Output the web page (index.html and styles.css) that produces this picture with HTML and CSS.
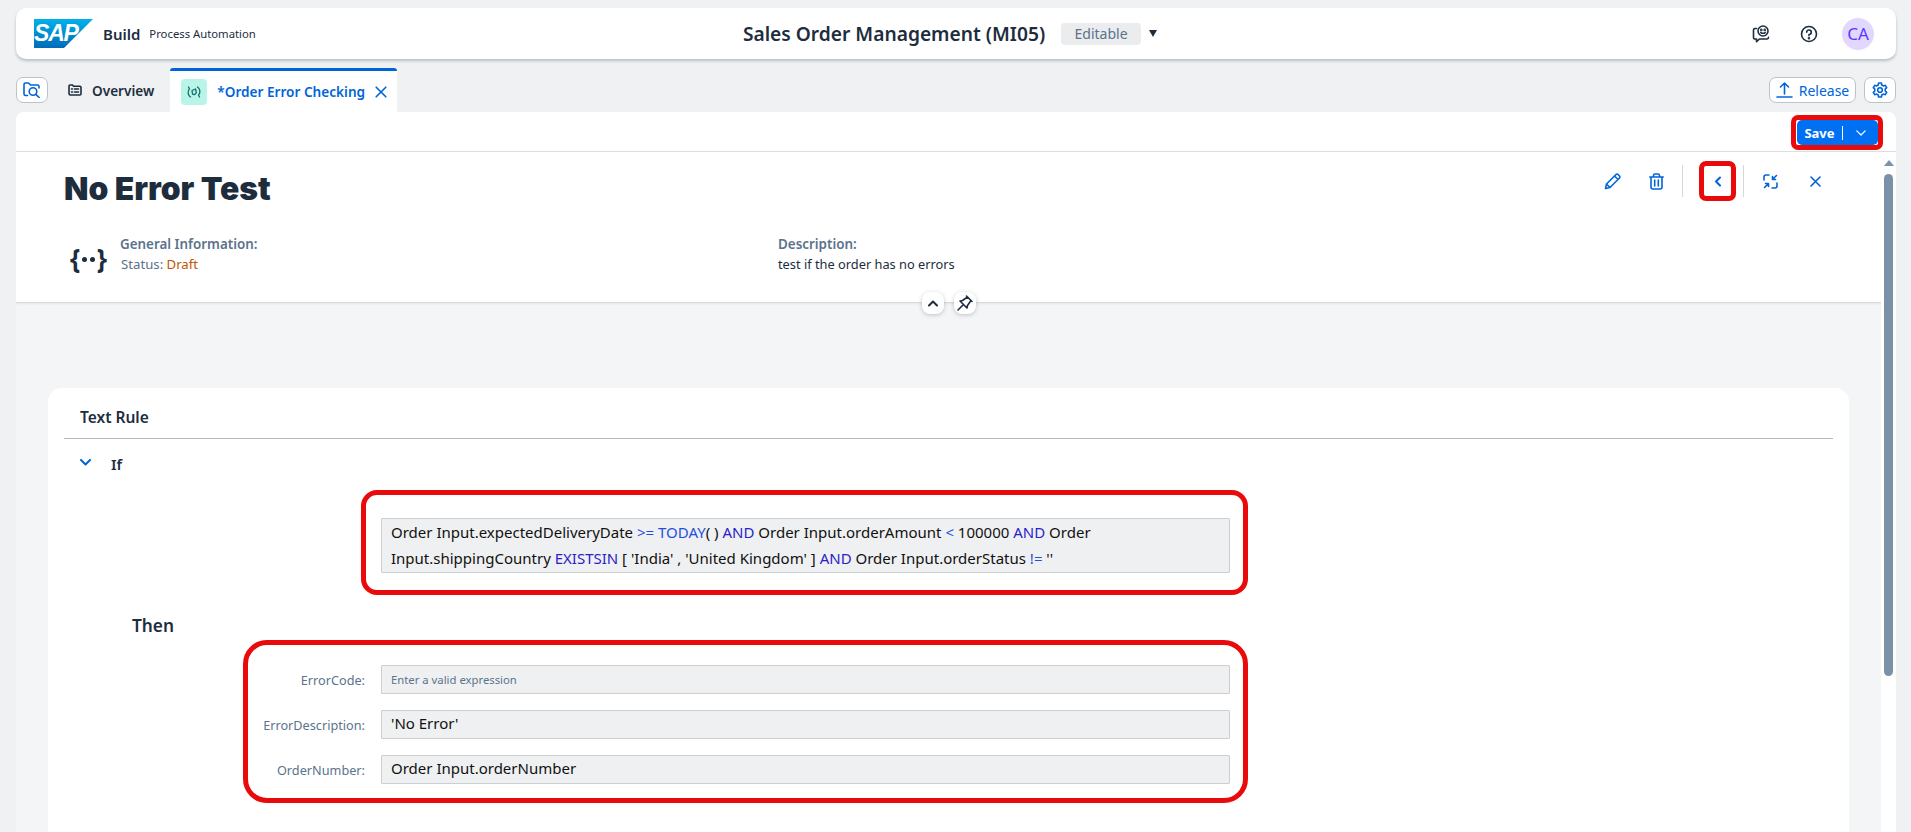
FILE: index.html
```html
<!DOCTYPE html>
<html>
<head>
<meta charset="utf-8"/>
<title>Order Error Checking</title>
<link rel="stylesheet" href="styles.css">
</head>
<body>

<header class="shell">
  <div class="shell-left">
    <div class="sap-logo">
      <svg width="59" height="29" viewBox="0 0 59 29">
        <defs>
          <linearGradient id="sapblue" x1="0" y1="0" x2="0" y2="1">
            <stop offset="0" stop-color="#00b1eb"/>
            <stop offset="1" stop-color="#006cb8"/>
          </linearGradient>
        </defs>
        <polygon points="0,0 59,0 30,29 0,29" fill="url(#sapblue)"/>
      </svg>
      <span class="sap-word">SAP</span>
    </div>
    <span class="brand">Build</span>
    <span class="product">Process Automation</span>
  </div>
  <div class="shell-mid">
    <span class="project">Sales Order Management (MI05)</span>
    <span class="pill">Editable</span>
    <span class="caret"></span>
  </div>
  <div class="shell-right">
    <svg class="ico-dark ico-mid" width="18" height="18" viewBox="0 0 18 18">
      <path d="M4.500 3.500H3A1.500 1.500 0 0 0 1.500 5v7.500A1.500 1.500 0 0 0 3 14h1.500v2.700l3-2.700H15a1.800 1.800 0 0 0 1.500-1.800" />
      <circle cx="11" cy="6" r="5"/>
      <circle cx="9.300" cy="4.900" r=".5"/>
      <circle cx="12.700" cy="4.900" r=".5"/>
      <path d="M8.800 7.400c1 1.200 3.400 1.200 4.400 0"/>
    </svg>
    <svg class="ico-dark ico-mid" width="18" height="18" viewBox="0 0 18 18">
      <circle cx="9" cy="9" r="7.500"/>
      <path d="M6.700 7.200A2.300 2.300 0 1 1 9 9.600v1.200"/>
      <circle cx="9" cy="13.200" r=".5"/>
    </svg>
    <span class="avatar">CA</span>
  </div>
</header>

<nav class="tabs">
  <button class="tool-btn">
    <svg class="ico-blue ico-mid" width="18" height="16" viewBox="0 0 18 16">
      <path d="M4.500 13.500H2.500A1.500 1.500 0 0 1 1 12V2.500A1.500 1.500 0 0 1 2.500 1h3l2 2h7A1.500 1.500 0 0 1 16 4.500V6"/>
      <circle cx="10" cy="9.500" r="3.800"/>
      <path d="M12.800 12.300l3.400 3.200"/>
    </svg>
  </button>
  <div class="tab">
    <svg class="ico-dark ico-mid" width="14" height="12" viewBox="0 0 14 12">
      <path d="M1 9.500V2.200A1.200 1.200 0 0 1 2.200 1h2.300l1 1.200h6.300A1.200 1.200 0 0 1 13 3.400v6.400a1.200 1.200 0 0 1-1.200 1.200H2.500A1.500 1.500 0 0 1 1 9.500z"/>
      <path d="M3.500 5h1M6.500 5h4M3.500 8h1M6.500 8h4"/>
    </svg>
    <span>Overview</span>
  </div>
  <div class="tab tab-active">
    <span class="tab-badge">
      <svg width="14" height="14" viewBox="0 0 14 14">
        <path d="M2 4.500A5.500 5.500 0 0 0 3.500 12M1.500 2l1 2M12 9.500A5.500 5.500 0 0 0 10.500 2M12.500 12l-1-2"/>
        <path d="M5 5.500l3.500-1.500.8 3.500A2.400 2.400 0 0 1 5.500 9z"/>
      </svg>
    </span>
    <span>*Order Error Checking</span>
    <svg class="ico-blue ico-mid" width="12" height="12" viewBox="0 0 12 12">
      <path d="M1.200 1.200l9.600 9.600M10.800 1.200l-9.600 9.600"/>
    </svg>
  </div>
  <div class="tabs-end">
    <button class="tool-btn release">
      <svg class="ico-blue ico-mid" width="17" height="18" viewBox="0 0 17 18">
        <path d="M8.500 13V2M4.500 6l4-4 4 4M1 16h15"/>
      </svg>
      <span>Release</span>
    </button>
    <button class="tool-btn gear">
      <svg class="ico-blue ico-mid" width="16" height="16" viewBox="0 0 16 16">
        <path d="M6.600 1h2.800l.4 2 1.500.9 2-.6 1.400 2.400-1.500 1.400v1.800l1.500 1.400-1.400 2.400-2-.6-1.500.9-.4 2H6.600l-.4-2-1.500-.9-2 .6-1.400-2.400 1.500-1.400V7.100L1.300 5.700l1.400-2.400 2 .6 1.500-.9z"/>
        <circle cx="8" cy="8" r="2.300"/>
      </svg>
    </button>
  </div>
</nav>

<section class="panel">
  <div class="panel-bar">
    <div class="mark mark-save">
      <button class="save">
        <span class="save-label">Save</span>
        <span class="save-arrow">
          <svg width="10" height="6" viewBox="0 0 10 6"><path d="M.8.8L5 5l4.200-4.200"/></svg>
        </span>
      </button>
    </div>
  </div>

  <div class="panel-scroll">
    <main class="page">
      <div class="object-head">
        <div class="title-row">
          <h1>No Error Test</h1>
          <div class="actions">
            <svg class="ico-blue ico-mid" width="17" height="17" viewBox="0 0 17 17">
              <path d="M1.500 15.500l1-4.500L12 1.500a1.400 1.400 0 0 1 2 0l1.500 1.500a1.400 1.400 0 0 1 0 2L6 14.500zM2.500 11L6 14.500M10.500 3l3.500 3.500"/>
            </svg>
            <svg class="ico-blue ico-mid act-trash" width="15" height="17" viewBox="0 0 15 17">
              <path d="M.8 4h13.400M4.500 4V2.500A1.500 1.500 0 0 1 6 1h3a1.500 1.500 0 0 1 1.500 1.500V4M2 4v10a2 2 0 0 0 2 2h7a2 2 0 0 0 2-2V4M5.700 7v6M9.300 7v6"/>
            </svg>
            <span class="act-sep"></span>
            <div class="mark mark-back">
              <svg class="ico-blue ico-thick" width="8" height="11" viewBox="0 0 8 11"><path d="M6 1.500L2 5.500 6 9.500"/></svg>
            </div>
            <span class="act-sep"></span>
            <svg class="ico-blue ico-mid act-shrink" width="15" height="15" viewBox="0 0 15 15">
              <path d="M1 6V3a2 2 0 0 1 2-2h3M14 9v3a2 2 0 0 1-2 2H9M13.500 1.500l-4 4M9.500 2.500v3h3M1.500 13.500l4-4M2.500 9.500h3v3"/>
            </svg>
            <svg class="ico-blue ico-mid act-close" width="11" height="11" viewBox="0 0 11 11">
              <path d="M1 1l9 9M10 1l-9 9"/>
            </svg>
          </div>
        </div>
        <div class="facets">
          <div class="facet-icon">
            <span class="brace">{</span>
            <span class="dot"></span>
            <span class="dot"></span>
            <span class="brace">}</span>
          </div>
          <div class="facet facet-info">
            <div class="facet-label">General Information:</div>
            <div class="facet-text"><span class="muted">Status:</span> <span class="draft">Draft</span></div>
          </div>
          <div class="facet">
            <div class="facet-label">Description:</div>
            <div class="facet-text">test if the order has no errors</div>
          </div>
        </div>
        <div class="head-toggles">
          <span class="round-btn">
            <svg class="ico-dark ico-thick" width="10" height="7" viewBox="0 0 10 7"><path d="M1 5.500l4-4 4 4"/></svg>
          </span>
          <span class="round-btn">
            <svg class="ico-dark ico-mid" width="16" height="16" viewBox="0 0 16 16">
              <path d="M9.500 1l5.500 5.500M10.500 2l-5 3.500-2.500.5 7 7 .5-2.500 3.500-5M6 10l-5 5"/>
            </svg>
          </span>
        </div>
      </div>

      <div class="card">
        <div class="card-title">Text Rule</div>
        <div class="if-row">
          <svg class="ico-blue ico-thick" width="11" height="7" viewBox="0 0 11 7"><path d="M1 1l4.500 4.500L10 1"/></svg>
          <span>If</span>
        </div>
        <div class="mark mark-if">
          <div class="expr expr-multi">
            <div>Order Input.expectedDeliveryDate <span class="op">&gt;=</span> <span class="op">TODAY</span>( ) <span class="kw">AND</span> Order Input.orderAmount <span class="op">&lt;</span> 100000 <span class="kw">AND</span> Order</div>
            <div>Input.shippingCountry <span class="kw">EXISTSIN</span> [ 'India' , 'United Kingdom' ] <span class="kw">AND</span> Order Input.orderStatus <span class="op">!=</span> ''</div>
          </div>
        </div>
        <div class="then-label">Then</div>
        <div class="mark mark-then">
          <div class="field">
            <label>ErrorCode:</label>
            <div class="expr expr-hint">Enter a valid expression</div>
          </div>
          <div class="field">
            <label>ErrorDescription:</label>
            <div class="expr">'No Error'</div>
          </div>
          <div class="field">
            <label>OrderNumber:</label>
            <div class="expr">Order Input.orderNumber</div>
          </div>
        </div>
      </div>
    </main>
    <div class="scrollbar">
      <span class="scroll-up"></span>
      <span class="scroll-thumb"></span>
    </div>
  </div>
</section>

</body>
</html>
```

FILE: styles.css
```css
* {
   box-sizing: border-box;
}

html, body {
   height: 100%;
}

body {
   margin: 0;
   padding: 8px 15px 0 16px;
   overflow: hidden;
   display: flex;
   flex-direction: column;
   background-color: #eff1f2;
   color: #1d2d3e;
   font-family: "Noto Sans", "Open Sans", sans-serif;
   font-size: 14px;
}

button {
   font-family: inherit;
}

svg {
   display: block;
   flex: none;
   fill: none;
   stroke-linecap: round;
   stroke-linejoin: round;
   stroke-width: 1.3;
}

.ico-blue {
   stroke: #0064d9;
}

.ico-dark {
   stroke: #1d2d3e;
}

.ico-mid {
   stroke-width: 1.6;
}

.ico-thick {
   stroke-width: 2;
}

/* top shell bar */

.shell {
   flex: none;
   height: 51px;
   display: grid;
   grid-template-columns: 1fr auto 1fr;
   align-items: center;
   background-color: #fff;
   border-radius: 10px;
   box-shadow: 0 2px 3px rgba(29, 45, 62, 0.25);
}

.shell-left {
   display: flex;
   align-items: center;
   padding-left: 18px;
}

.sap-logo {
   position: relative;
   width: 59px;
   height: 29px;
   margin-right: 9px;
}

.sap-word {
   position: absolute;
   left: 0;
   top: 1px;
   color: #fff;
   font-family: "Liberation Sans", sans-serif;
   font-size: 23px;
   line-height: 27px;
   font-weight: 700;
   font-style: italic;
   letter-spacing: -1.2px;
}

.brand {
   margin-left: 1px;
   font-size: 15px;
   font-weight: 600;
}

.product {
   margin-left: 9px;
   font-size: 11.3px;
}

.shell-mid {
   padding-right: 12px;
   display: flex;
   align-items: center;
}

.project {
   font-size: 19.2px;
   font-weight: 600;
}

.pill {
   width: 80px;
   height: 22px;
   margin-left: 16px;
   display: flex;
   align-items: center;
   justify-content: center;
   background-color: #eaecee;
   border-radius: 4px;
   color: #5b738b;
   font-size: 14px;
}

.caret {
   width: 0;
   height: 0;
   margin-left: 8px;
   border-left: 4.5px solid transparent;
   border-right: 4.5px solid transparent;
   border-top: 7px solid #1d2d3e;
}

.shell-right {
   display: flex;
   align-items: center;
   justify-content: flex-end;
   gap: 30px;
   padding-right: 22px;
}

.avatar {
   width: 32px;
   height: 32px;
   margin-left: -6px;
   display: flex;
   align-items: center;
   justify-content: center;
   border-radius: 50%;
   background-color: #e2d8ff;
   color: #5d36ff;
   font-size: 17px;
}

/* tab strip */

.tabs {
   flex: none;
   height: 44px;
   margin-top: 9px;
   display: flex;
   align-items: center;
}

.tool-btn {
   height: 26px;
   width: 32px;
   padding: 0;
   display: flex;
   align-items: center;
   justify-content: center;
   background-color: #fff;
   border: 1px solid #bcc3ca;
   border-radius: 7px;
   color: #0064d9;
   font-size: 14px;
}

.tab {
   height: 44px;
   display: flex;
   align-items: center;
   gap: 10px;
   margin-left: 20px;
   font-weight: 600;
   font-size: 13.6px;
}

.tab-active {
   width: 227px;
   margin-left: 16px;
   padding: 0 10px 0 11px;
   gap: 0;
   justify-content: space-between;
   background-color: #fff;
   border-top: 3px solid #0064d9;
   border-radius: 3px 3px 0 0;
   color: #0064d9;
}

.tab-badge {
   width: 26px;
   height: 26px;
   display: flex;
   align-items: center;
   justify-content: center;
   background-color: #b8f5e8;
   border-radius: 4px;
}

.tab-badge svg {
   stroke: #0f6f6a;
}

.tabs-end {
   margin-left: auto;
   display: flex;
   gap: 8px;
}

.release {
   width: 87px;
   gap: 6px;
}

.gear {
   width: 32px;
}

/* main panel */

.panel {
   flex: 1;
   min-height: 0;
   display: flex;
   flex-direction: column;
   background-color: #fff;
   border-radius: 8px 8px 0 0;
   overflow: hidden;
}

.panel-bar {
   flex: none;
   height: 40px;
   padding: 3px 13px 0 0;
   display: flex;
   justify-content: flex-end;
   border-bottom: 1px solid #dcdee0;
}

.mark {
   border: 5px solid #e90b0b;
   background-color: #fff;
}

.mark-save {
   width: 92px;
   height: 35px;
   padding: 0 0 0 1px;
   border-radius: 7px;
}

.save {
   width: 81px;
   height: 25px;
   padding: 0;
   display: flex;
   align-items: center;
   background-color: #0070f2;
   border: none;
   border-radius: 5px;
   color: #fff;
   font-size: 13px;
   font-weight: 700;
}

.save-label {
   width: 46px;
   height: 14px;
   line-height: 14px;
   border-right: 1px solid #fff;
}

.save-arrow {
   flex: 1;
   display: flex;
   justify-content: center;
}

.save-arrow svg {
   stroke: #fff;
   stroke-width: 1.2;
}

.panel-scroll {
   flex: 1;
   min-height: 0;
   display: flex;
}

.page {
   flex: 1;
   min-width: 0;
   overflow: hidden;
   background-color: #f4f5f7;
}

.scrollbar {
   flex: none;
   width: 15px;
   padding: 8px 3px 0;
   display: flex;
   flex-direction: column;
   align-items: center;
   gap: 8px;
   background-color: #fff;
}

.scroll-up {
   width: 0;
   height: 0;
   border-left: 5px solid transparent;
   border-right: 5px solid transparent;
   border-bottom: 6px solid #7b91a8;
}

.scroll-thumb {
   width: 9px;
   height: 502px;
   background-color: #7b91a8;
   border-radius: 5px;
}

/* object page header */

.object-head {
   position: relative;
   height: 151px;
   padding: 0 0 0 49px;
   background-color: #fff;
   border-bottom: 1px solid #d9dcdf;
   box-shadow: 0 1px 2px rgba(29, 45, 62, 0.08);
}

.title-row {
   height: 75px;
   display: flex;
   justify-content: space-between;
}

h1 {
   margin: 17px 0 0 -1px;
   font-family: Inter, sans-serif;
   font-size: 31.8px;
   line-height: 40px;
   font-weight: 900;
}

.actions {
   height: 48px;
   padding: 9px 60px 0 0;
   display: flex;
   align-items: center;
}

.actions > svg {
   margin-top: 2px;
}

.act-trash {
   margin-left: 28px;
}

.act-sep {
   width: 1px;
   height: 32px;
   margin-left: 18px;
   background-color: #d5d8db;
}

.mark-back {
   width: 37px;
   height: 40px;
   margin-left: 16px;
   padding-top: 2px;
   display: flex;
   align-items: center;
   justify-content: center;
   border-radius: 7px;
}

.mark-back + .act-sep {
   margin-left: 7px;
}

.act-shrink {
   margin-left: 19px;
}

.act-close {
   margin-left: 32px;
}

.facets {
   display: flex;
   align-items: flex-start;
   padding-top: 7px;
}

.facet-icon {
   width: 37px;
   height: 26px;
   margin: 11px 0 0 5px;
   display: flex;
   align-items: center;
   justify-content: space-between;
   color: #1d2d3e;
}

.brace {
   font-family: "Noto Sans", sans-serif;
   font-size: 26px;
   line-height: 26px;
   font-weight: 700;
}

.dot {
   width: 5px;
   height: 5px;
   margin-top: 3px;
   border-radius: 50%;
   background-color: #1d2d3e;
}

.facet-info {
   width: 658px;
   margin-left: 13px;
}

.facet-label {
   color: #5b738b;
   font-size: 13.4px;
   line-height: 20px;
   font-weight: 600;
}

.facet-text {
   font-size: 12.8px;
   line-height: 20px;
}

.muted {
   margin-left: 1px;
   color: #5b738b;
   font-size: 13.2px;
}

.draft {
   color: #c35500;
   font-size: 13.2px;
}

.head-toggles {
   position: absolute;
   left: 906px;
   bottom: -12px;
   display: flex;
   gap: 10px;
}

.round-btn {
   width: 22px;
   height: 22px;
   display: flex;
   align-items: center;
   justify-content: center;
   background-color: #fff;
   border-radius: 8px;
   box-shadow: 0 1px 4px rgba(29, 45, 62, 0.25);
}

/* rule card */

.card {
   margin: 85px 32px 0;
   padding: 0 16px 40px;
   background-color: #fff;
   border-radius: 14px 14px 0 0;
}

.card-title {
   height: 51px;
   padding: 19px 0 0 16px;
   border-bottom: 1px solid #afb8c1;
   font-size: 15.5px;
   line-height: 20px;
   font-weight: 600;
}

.if-row {
   height: 51px;
   display: flex;
   gap: 20px;
   align-items: center;
   padding: 0 0 0 16px;
   font-size: 15px;
   font-weight: 600;
}

.if-row svg {
   margin-top: -5px;
}

.if-row span {
   margin-top: -2px;
}

.mark-if {
   width: 887px;
   height: 105px;
   margin-left: 297px;
   padding: 23px 13px 0 15px;
   border-radius: 16px;
}

.expr {
   height: 29px;
   padding: 0 9px;
   background-color: #eff0f2;
   border: 1px solid #cdced0;
   border-radius: 1px;
   color: #111;
   font-size: 15px;
   line-height: 25px;
}

.expr-multi {
   width: 849px;
   height: 55px;
   line-height: 26px;
}

.expr-hint {
   color: #5b738b;
   font-size: 11.3px;
   line-height: 28px;
}

.op {
   color: #1f4fe0;
}

.kw {
   color: #2a1fc9;
}

.then-label {
   height: 45px;
   padding: 20px 0 0 68px;
   font-size: 17.3px;
   line-height: 22px;
   font-weight: 600;
}

.mark-then {
   width: 1005px;
   height: 163px;
   margin-left: 179px;
   padding: 20px 13px 0 0;
   display: flex;
   flex-direction: column;
   gap: 16px;
   border-radius: 24px;
}

.field {
   display: flex;
   align-items: center;
}

.field label {
   width: 117px;
   margin-right: 16px;
   text-align: right;
   color: #5b738b;
   font-size: 12.7px;
}

.field .expr {
   flex: 1;
}
```
